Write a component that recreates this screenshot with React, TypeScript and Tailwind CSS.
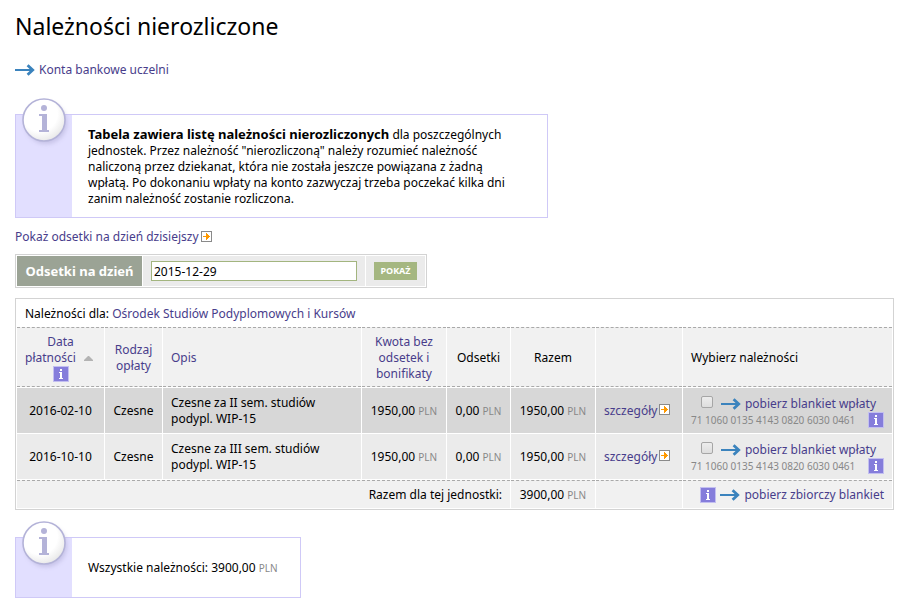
import type { ReactNode } from 'react'

interface Payment {
  id: string
  date: string
  kind: string
  description: string
  amount: string
  interest: string
  total: string
  account: string
}

const payments: Payment[] = [
  {
    id: 'p1',
    date: '2016-02-10',
    kind: 'Czesne',
    description: 'Czesne za II sem. studiów podypl. WIP-15',
    amount: '1950,00',
    interest: '0,00',
    total: '1950,00',
    account: '71 1060 0135 4143 0820 6030 0461',
  },
  {
    id: 'p2',
    date: '2016-10-10',
    kind: 'Czesne',
    description: 'Czesne za III sem. studiów podypl. WIP-15',
    amount: '1950,00',
    interest: '0,00',
    total: '1950,00',
    account: '71 1060 0135 4143 0820 6030 0461',
  },
]

function ArrowIcon() {
  return (
    <svg className="block h-3 w-5 shrink-0" viewBox="0 0 20 12" fill="none" stroke="#3b83bd" aria-hidden="true">
      <path d="M0 6h18" strokeWidth="2" />
      <path d="M12.600 1.200 17.700 6l-5.100 4.800" strokeWidth="2.8" />
    </svg>
  )
}

function GoIcon() {
  return (
    <svg className="mb-0.5 block h-[11px] w-[11px] shrink-0" viewBox="0 0 11 11" aria-hidden="true">
      <rect x="0.5" y="0.5" width="10" height="10" fill="#fff" stroke="#8a8a8a" />
      <path d="M2 5H5V2H6V3H7V4H8V5H9V6H8V7H7V8H6V9H5V6H2Z" fill="#ff9900" />
    </svg>
  )
}

function InfoBadge() {
  return (
    <svg className="block h-4 w-4 shrink-0" viewBox="0 0 16 16" role="img" aria-label="Informacja">
      <rect width="16" height="16" fill="#c3bff0" />
      <rect x="1" y="1" width="14" height="14" fill="#857ddb" />
      <path d="M7 3h2v2H7zM6 6h3v6h1v1H6v-1h1V7H6z" fill="#fff" />
    </svg>
  )
}

function InfoCircle() {
  return (
    <svg className="block h-[54px] w-[57px]" viewBox="0 0 57 54" aria-hidden="true">
      <defs>
        <radialGradient id="disc" cx="0.4" cy="0.35" r="0.7">
          <stop offset="0.6" stopColor="#ffffff" />
          <stop offset="1" stopColor="#e6e6e6" />
        </radialGradient>
        <filter id="soft" x="-20%" y="-20%" width="150%" height="150%">
          <feGaussianBlur stdDeviation="2" />
        </filter>
      </defs>
      <circle cx="31" cy="26" r="21" fill="#9d99c4" opacity="0.4" filter="url(#soft)" />
      <circle cx="29" cy="23" r="21" fill="url(#disc)" stroke="#b4b3d8" strokeWidth="1.6" />
      <circle cx="29" cy="11" r="3" fill="#b4b3d8" />
      <path d="M24 17h8v16h2v2H24v-2h3V19h-3z" fill="#b4b3d8" />
    </svg>
  )
}

function Money({ value }: { value: string }) {
  return (
    <span className="whitespace-nowrap">
      {value} <span className="text-[10px] text-[#888]">PLN</span>
    </span>
  )
}

function InfoBox({ children, className }: { children: ReactNode; className: string }) {
  return (
    <div className={`relative flex border border-[#cfc9f7] ${className}`}>
      <div className="w-14 shrink-0 bg-[#e2dfff]" />
      <div className="absolute -left-px -top-[18px]">
        <InfoCircle />
      </div>
      <div className="flex items-center pb-2.5 pl-4 pt-[11px]">{children}</div>
    </div>
  )
}

const linkClass = 'text-[#483d8b] hover:underline'
const headClass = 'border-y border-dashed border-[#a9a9a9] bg-[#f1f1f1] px-2 pb-1 pt-1.5 font-normal'
const footClass = 'border-t border-dashed border-[#a9a9a9] bg-[#f1f1f1]'

export default function App() {
  return (
    <main className="bg-white pb-1 pl-[15px] pr-[21px] pt-2 font-['Noto_Sans',sans-serif] text-[12px] leading-4 text-black">
      <h1 className="text-[23px] leading-9">Należności nierozliczone</h1>

      <a href="#konta" className={`mt-[18px] flex w-fit items-center gap-1 ${linkClass}`}>
        <ArrowIcon />
        Konta bankowe uczelni
      </a>

      <InfoBox className="mt-9 max-w-[533px]">
        <p className="pr-7">
          <strong className="text-[13px]">Tabela zawiera listę należności nierozliczonych</strong> dla poszczególnych
          jednostek. Przez należność "nierozliczoną" należy rozumieć należność naliczoną przez dziekanat, która nie
          została jeszcze powiązana z żadną wpłatą. Po dokonaniu wpłaty na konto zazwyczaj trzeba poczekać kilka dni
          zanim należność zostanie rozliczona.
        </p>
      </InfoBox>

      <a href="#dzisiaj" className={`mt-[11px] flex w-fit items-center gap-0.5 ${linkClass}`}>
        Pokaż odsetki na dzień dzisiejszy
        <GoIcon />
      </a>

      <form
        className="mt-[9px] flex h-[34px] w-[412px] gap-px border border-[#d3d3d3] p-px"
        onSubmit={(e) => e.preventDefault()}
      >
        <label
          htmlFor="interest-date"
          className="flex w-[125px] items-center justify-center bg-[#9ba395] text-[13px] font-bold text-white"
        >
          Odsetki na dzień
        </label>
        <div className="flex flex-1 items-center bg-[#ebebeb] px-2">
          <input
            id="interest-date"
            type="text"
            defaultValue="2015-12-29"
            className="h-5 w-full border border-[#a3b57f] bg-white px-0.5"
          />
        </div>
        <div className="flex w-[59px] items-center justify-center bg-[#ebebeb]">
          <button type="submit" className="h-[18px] w-[43px] bg-[#a5b781] text-[9px] font-bold text-white">
            POKAŻ
          </button>
        </div>
      </form>

      <table className="mt-[10px] w-full table-fixed border-separate border-spacing-px border border-[#d3d3d3]">
        <colgroup>
          <col className="w-[87px]" />
          <col className="w-[57px]" />
          <col />
          <col className="w-[84px]" />
          <col className="w-[63px]" />
          <col className="w-[84px]" />
          <col className="w-[86px]" />
          <col className="w-[209px]" />
        </colgroup>
        <thead>
          <tr>
            <th colSpan={8} className="h-[26px] px-2 pt-0.5 text-left font-normal">
              Należności dla:{' '}
              <a href="#osrodek" className={linkClass}>
                Ośrodek Studiów Podyplomowych i Kursów
              </a>
            </th>
          </tr>
          <tr>
            <th className={headClass}>
              <a href="#data" className={`block ${linkClass}`}>
                Data
                <span className="flex items-center gap-2">
                  płatności
                  <svg className="h-[5px] w-[9px]" viewBox="0 0 9 5" aria-hidden="true">
                    <path d="M4 0h1l4 4v1H0V4z" fill="#b3b3b3" />
                  </svg>
                </span>
              </a>
              <span className="flex justify-center">
                <InfoBadge />
              </span>
            </th>
            <th className={headClass}>
              <a href="#rodzaj" className={linkClass}>
                Rodzaj opłaty
              </a>
            </th>
            <th className={`text-left ${headClass}`}>
              <a href="#opis" className={linkClass}>
                Opis
              </a>
            </th>
            <th className={headClass}>
              <a href="#kwota" className={linkClass}>
                Kwota bez odsetek i bonifikaty
              </a>
            </th>
            <th className={headClass}>Odsetki</th>
            <th className={headClass}>Razem</th>
            <td className={headClass} />
            <th className={`text-left ${headClass}`}>Wybierz należności</th>
          </tr>
        </thead>
        <tbody>
          {payments.map((p) => (
            <tr key={p.id} className="h-[45px] bg-[#ebebeb] odd:bg-[#d7d7d7]">
              <td className="text-center">{p.date}</td>
              <td className="text-center">{p.kind}</td>
              <td className="pl-2 pr-6">{p.description}</td>
              <td className="text-center">
                <Money value={p.amount} />
              </td>
              <td className="text-center">
                <Money value={p.interest} />
              </td>
              <td className="text-center">
                <Money value={p.total} />
              </td>
              <td className="px-2">
                <a href={`#szczegoly-${p.id}`} className={`flex items-center gap-0.5 ${linkClass}`}>
                  szczegóły
                  <GoIcon />
                </a>
              </td>
              <td className="px-2 pt-0.5">
                <div className="flex items-center">
                  <input
                    type="checkbox"
                    aria-label={`Wybierz należność ${p.date}`}
                    className="mb-1 ml-2.5 mr-2 h-3 w-3 appearance-none rounded-[2px] border border-[#a6a6a6] bg-linear-to-b from-[#ededed] to-[#dedede]"
                  />
                  <a href={`#blankiet-${p.id}`} className={`flex items-center gap-1 whitespace-nowrap ${linkClass}`}>
                    <ArrowIcon />
                    pobierz blankiet wpłaty
                  </a>
                </div>
                <div className="flex items-center justify-between whitespace-nowrap text-[10px] text-[#888]">
                  {p.account}
                  <InfoBadge />
                </div>
              </td>
            </tr>
          ))}
        </tbody>
        <tfoot>
          <tr className="h-7">
            <td colSpan={5} className={`px-2 text-right ${footClass}`}>
              Razem dla tej jednostki:
            </td>
            <td className={`text-center ${footClass}`}>
              <Money value="3900,00" />
            </td>
            <td className={footClass} />
            <td className={`px-2 ${footClass}`}>
              <div className="flex items-center justify-end gap-1">
                <InfoBadge />
                <a href="#zbiorczy" className={`flex items-center gap-1 whitespace-nowrap ${linkClass}`}>
                  <ArrowIcon />
                  pobierz zbiorczy blankiet
                </a>
              </div>
            </td>
          </tr>
        </tfoot>
      </table>

      <InfoBox className="mt-[27px] min-h-[61px] w-[286px]">
        <p>
          Wszystkie należności: <Money value="3900,00" />
        </p>
      </InfoBox>
    </main>
  )
}
